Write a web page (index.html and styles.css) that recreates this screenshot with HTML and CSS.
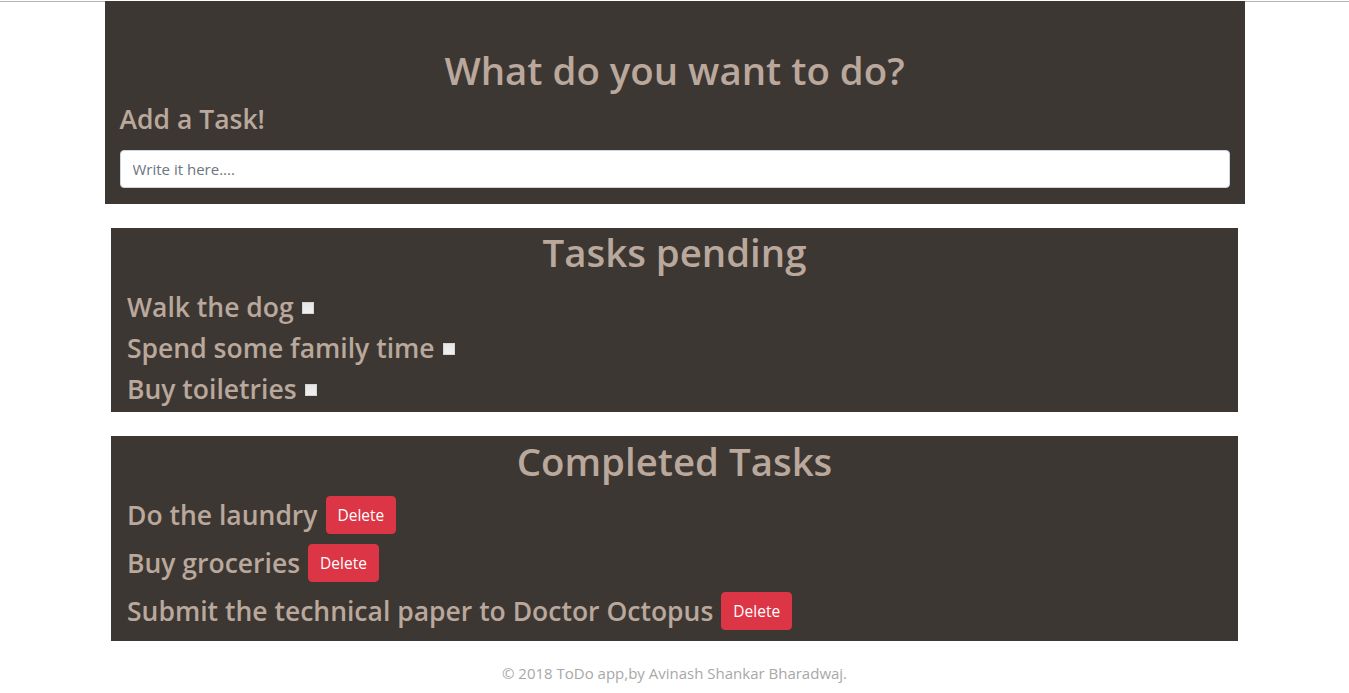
FILE: index.html
```html
<!DOCTYPE html>
<html lang="en">
<head>
<meta charset="utf-8">
<title>ToDo app</title>
<link rel="stylesheet" href="styles.css">
</head>
<body>
<div class="page">
  <section class="add-box">
    <h1 class="title">What do you want to do?</h1>
    <h3 class="subtitle">Add a Task!</h3>
    <input class="task-input" type="text" placeholder="Write it here....">
  </section>

  <section class="list-box">
    <h1 class="title">Tasks pending</h1>
    <div class="task-row pending"><span>Walk the dog</span><input class="check" type="checkbox"></div>
    <div class="task-row pending"><span>Spend some family time</span><input class="check" type="checkbox"></div>
    <div class="task-row pending"><span>Buy toiletries</span><input class="check" type="checkbox"></div>
  </section>

  <section class="list-box completed">
    <h1 class="title">Completed Tasks</h1>
    <div class="task-row done"><span>Do the laundry</span><button class="btn-delete">Delete</button></div>
    <div class="task-row done"><span>Buy groceries</span><button class="btn-delete">Delete</button></div>
    <div class="task-row done"><span>Submit the technical paper to Doctor Octopus</span><button class="btn-delete">Delete</button></div>
  </section>

  <footer class="footer">© 2018 ToDo app,by Avinash Shankar Bharadwaj.</footer>
</div>
</body>
</html>
```

FILE: styles.css
```css
html, body {
  margin: 0;
  padding: 0;
  background: #ffffff;
}

body {
  font-family: "Open Sans", "Noto Sans", sans-serif;
  border-top: 1px solid #ffffff;
}

.page {
  border-top: 1px solid #b4b4b4;
}

.add-box {
  width: 1140px;
  box-sizing: border-box;
  margin: -1px auto 0;
  background: #3d3733;
  padding: 45px 15px 16px;
}

.title {
  margin: 0 0 8px;
  font-size: 38.4px;
  font-weight: 600;
  line-height: 48px;
  text-align: center;
  color: #b9a89b;
}

.subtitle {
  margin: 0 0 14px;
  font-size: 26.5px;
  font-weight: 600;
  line-height: 34px;
  color: #b9a89b;
}

.task-input {
  display: block;
  width: 100%;
  box-sizing: border-box;
  height: 38px;
  padding: 6px 12px;
  font-family: inherit;
  font-size: 15px;
  color: #495057;
  background: #ffffff;
  border: 1px solid #ced4da;
  border-radius: 4px;
}

.task-input::placeholder {
  color: #6c757d;
}

.list-box {
  width: 1127px;
  box-sizing: border-box;
  margin: 24px auto 0;
  background: #3d3733;
  padding: 0 16px 3px;
}

.list-box .title {
  margin-bottom: 10px;
}

.list-box.completed {
  margin-top: 24px;
  padding-top: 1px;
  padding-bottom: 6px;
}

.list-box.completed .title {
  margin-bottom: 6px;
}

.task-row {
  display: flex;
  align-items: center;
  font-size: 26.5px;
  font-weight: 600;
  color: #b9a89b;
}

.task-row.pending {
  height: 41px;
}

.task-row.done {
  height: 48px;
}

.check {
  appearance: none;
  -webkit-appearance: none;
  width: 12px;
  height: 12px;
  margin: 3px 0 0 8px;
  box-sizing: border-box;
  border: 1px solid #d4d4d4;
  background: linear-gradient(#e6e6e6, #f0f0f0);
}

.btn-delete {
  margin-left: 8px;
  height: 38px;
  padding: 6px 11px;
  font-family: inherit;
  font-size: 15.5px;
  color: #ffffff;
  background: #dc3545;
  border: 1px solid #dc3545;
  border-radius: 4px;
}

.footer {
  text-align: center;
  font-size: 15px;
  color: #a8a8a8;
  padding: 22px 0 0;
  line-height: 20px;
}
```
